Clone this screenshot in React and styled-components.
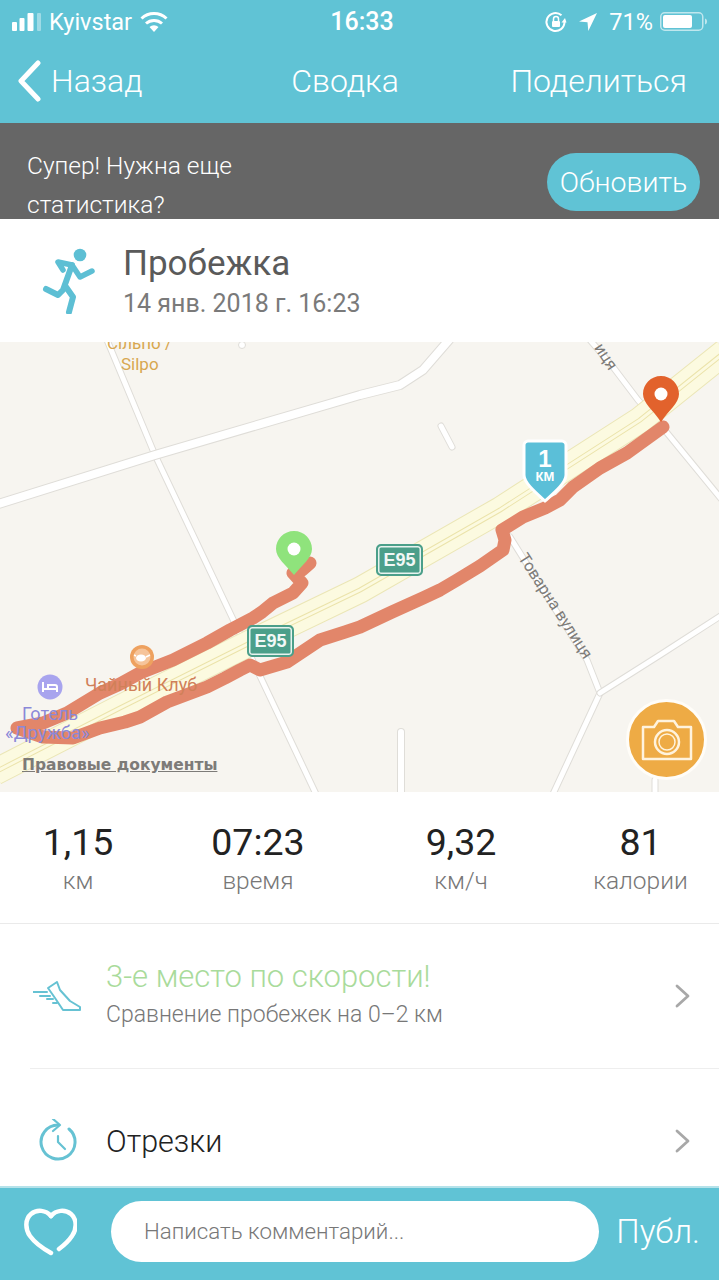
import React from 'react';
import styled, { createGlobalStyle } from 'styled-components';

const GlobalStyle = createGlobalStyle`
  html, body {
    margin: 0;
    padding: 0;
    background: #fff;
  }
`;

const teal = '#60c3d5';

const Page = styled.div`
  width: 719px;
  height: 1280px;
  overflow: hidden;
  display: flex;
  flex-direction: column;
  font-family: Roboto, "Liberation Sans", sans-serif;
  font-weight: 300;
  color: #fff;
`;
const TopBar = styled.div`
  height: 123px;
  flex: none;
  box-sizing: border-box;
  padding: 7px 12px 0 12px;
  background-color: ${teal};
  display: flex;
  flex-direction: column;
`;
const StatusRow = styled.div`
  display: grid;
  grid-template-columns: 1fr auto 1fr;
  align-items: center;
  height: 28px;
`;
const StatusSide = styled.div`
  display: flex;
  align-items: center;
  gap: ${(p) => p.$gap || 8}px;
  justify-content: ${(p) => (p.$end ? 'flex-end' : 'flex-start')};
  font-size: 23.5px;
  font-weight: 400;
`;
const Percent = styled.span`
  margin: 0 -3px 0 1px;
`;
const Clock = styled.div`
  font-size: 25px;
  font-weight: 500;
  margin-left: 5px;
`;
const NavRow = styled.div`
  margin-top: 18px;
  padding: 0 20px 0 5px;
  display: grid;
  grid-template-columns: 1fr auto 1fr;
  align-items: center;
  font-size: 32px;
  height: 56px;
`;
const BackLink = styled.div`
  display: flex;
  align-items: center;
  gap: 8px;
`;
const NavTitle = styled.div`
  margin-right: 14px;
`;
const ShareLink = styled.div`
  text-align: right;
`;
const Banner = styled.div`
  height: 96px;
  flex: none;
  box-sizing: border-box;
  padding: 0 19px 0 27px;
  background-color: #666;
  display: flex;
  justify-content: space-between;
  overflow: hidden;
`;
const BannerText = styled.div`
  font-size: 24.5px;
  line-height: 39px;
  padding-top: 23px;
`;
const UpdateButton = styled.div`
  align-self: flex-start;
  margin-top: 30px;
  width: 153px;
  height: 58px;
  border-radius: 29px;
  background-color: ${teal};
  font-size: 28.500px;
  display: flex;
  align-items: center;
  justify-content: center;
`;
const ActivityHead = styled.div`
  height: 123px;
  flex: none;
  box-sizing: border-box;
  padding: 0 0 0 40px;
  background: #fff;
  display: flex;
  align-items: center;
  gap: 27px;
`;
const RunnerWrap = styled.div`
  margin-top: 1px;
  display: flex;
`;
const ActivityTitle = styled.div`
  font-size: 35px;
  font-weight: 400;
  color: #5a5a5a;
  line-height: 40px;
`;
const ActivityDate = styled.div`
  font-size: 25px;
  font-weight: 400;
  color: #7a7a7a;
  margin-top: 5px;
`;
const MapArea = styled.div`
  position: relative;
  height: 450px;
  flex: none;
  overflow: hidden;
  background-color: #f7f5f0;
`;
const MapDrawing = styled.svg`
  position: absolute;
  inset: 0;
`;
const MapLabel = styled.span`
  position: absolute;
  left: ${(p) => p.$x}px;
  top: ${(p) => p.$y}px;
  font-size: ${(p) => p.$size || 17}px;
  line-height: 20px;
  font-weight: 400;
  color: ${(p) => p.$color};
  text-align: center;
  white-space: nowrap;
  transform: rotate(${(p) => p.$rotate || 0}deg);
  transform-origin: left center;
`;
const LegalLink = styled.span`
  position: absolute;
  left: 22px;
  top: 414px;
  font-family: "DejaVu Sans", sans-serif;
  font-size: 15.500px;
  font-weight: 700;
  color: #7d7b78;
  text-decoration: underline;
`;
const RoadShield = styled.div`
  position: absolute;
  left: ${(p) => p.$x}px;
  top: ${(p) => p.$y}px;
  width: 47px;
  height: 32px;
  box-sizing: border-box;
  border-radius: 5px;
  background: #4b9f8a;
  border: 2px solid #4b9f8a;
  box-shadow: inset 0 0 0 1.5px #e8f3ef;
  color: #f2f8f6;
  font-size: 18px;
  font-weight: 700;
  font-family: "Liberation Sans", sans-serif;
  display: flex;
  align-items: center;
  justify-content: center;
`;
const KmBadge = styled.div`
  position: absolute;
  left: 522px;
  top: 97px;
  width: 46px;
  height: 64px;
  color: #fff;
  font-family: "Liberation Sans", sans-serif;
  font-weight: 700;
  text-align: center;
`;
const KmShape = styled.svg`
  position: absolute;
  inset: 0;
`;
const KmValue = styled.div`
  position: relative;
  font-size: 24px;
  line-height: 22px;
  padding-top: 9px;
`;
const KmUnit = styled.div`
  position: relative;
  font-size: 13px;
  line-height: 14px;
`;
const CameraButton = styled.div`
  position: absolute;
  left: 626px;
  top: 357px;
  width: 81px;
  height: 81px;
  box-sizing: border-box;
  border-radius: 50%;
  background-color: #eeab45;
  border: 3px solid #fffdf8;
  display: flex;
  align-items: center;
  justify-content: center;
`;
const StatsRow = styled.div`
  height: 132px;
  flex: none;
  box-sizing: border-box;
  padding-top: 29px;
  border-bottom: 1px solid #eaeaea;
  background: #fff;
  display: grid;
  grid-template-columns: 156px 204px 202px 157px;
  text-align: center;
`;
const StatValue = styled.div`
  font-size: 37.500px;
  font-weight: 400;
  line-height: 43px;
  color: #222;
`;
const StatLabel = styled.div`
  font-size: 24.500px;
  color: #777;
  line-height: 30px;
  margin-top: 2px;
`;
const ListRow = styled.div`
  height: ${(p) => p.$height}px;
  flex: none;
  box-sizing: border-box;
  margin-left: 30px;
  padding: ${(p) => p.$top || 0}px 28px 0 0;
  background: #fff;
  border-bottom: ${(p) => (p.$divider ? '1px solid #eee' : 'none')};
  display: flex;
  align-items: center;
`;
const RowIcon = styled.div`
  width: 76px;
  flex: none;
  box-sizing: border-box;
  padding-left: ${(p) => p.$inset}px;
  display: flex;
`;
const RowBody = styled.div`
  flex: 1;
  margin-bottom: ${(p) => p.$lift || 0}px;
`;
const RowHighlight = styled.div`
  font-size: 31px;
  color: #a9db9b;
  line-height: 34px;
`;
const RowNote = styled.div`
  font-size: 23px;
  color: #777;
  margin-top: 7px;
`;
const RowTitle = styled.div`
  font-size: 30.500px;
  color: #222;
`;
const Footer = styled.div`
  flex: 1;
  background-color: ${teal};
  border-top: 2px solid #b5e2ea;
  box-sizing: border-box;
  padding: 13px 19px 0 24px;
  display: flex;
  align-items: flex-start;
  gap: 17px;
`;
const HeartWrap = styled.div`
  width: 53px;
  height: 48px;
  margin-top: 7px;
  margin-right: 17px;
  flex: none;
`;
const CommentBox = styled.div`
  flex: 1;
  height: 61px;
  border-radius: 31px;
  background: #fff;
  box-sizing: border-box;
  padding: 0 0 2px 33px;
  display: flex;
  align-items: center;
  color: #777;
  font-size: 22.300px;
`;
const PublishLink = styled.div`
  font-size: 33px;
  line-height: 61px;
`;

const Road = ({ points, width = 6 }) => (
  <>
    <polyline points={points} fill="none" stroke="#dfddd8" strokeWidth={width + 2} strokeLinecap="round" strokeLinejoin="round" />
    <polyline points={points} fill="none" stroke="#fff" strokeWidth={width} strokeLinecap="round" strokeLinejoin="round" />
  </>
);

// drawn in page coordinates, the view box starts at the top of the map
const routePoints = '310,563 302,570 293,573 302,583 293,593 273,603 262,612 253,618 230,630 207,643 173,660 140,673 120,684 100,693 67,713 43,723 17,728 43,737 73,738 100,728 125,722 140,717 167,702 207,687 225,678 240,670 250,665 260,670 287,662 305,650 320,640 345,632 360,627 392,612 423,598 440,590 457,580 480,566 503,550 505,540 502,530 523,517 545,508 560,500 573,487 600,468 627,453 645,440 663,427';
const highway = '-5,772 120,708 250,643 360,590 500,510 640,420 725,352';

const MapSketch = () => (
  <MapDrawing width="719" height="450" viewBox="0 342 719 450">
    <Road points="107,340 155,455 316,794" width={5} />
    <Road points="-5,505 155,455 360,395 400,385 423,370 449,340" width={8} />
    <Road points="590,340 613,367 638,400 663,428 722,500" width={5} />
    <Road points="510,537 587,660 600,693 553,794" width={5} />
    <Road points="600,693 660,655 722,615" width={5} />
    <Road points="441,426 452,447" width={5} />
    <Road points="401,732 401,796" width={6} />
    <Road points="655,780 655,796" width={5} />
    <circle cx="242" cy="345" r="3.5" fill="#fff" stroke="#dfddd8" strokeWidth="1" />
    <polyline points={highway} fill="none" stroke="#ebe6b6" strokeWidth="27" />
    <polyline points={highway} fill="none" stroke="#fcfae0" strokeWidth="25" />
    <polyline points={highway} fill="none" stroke="#ebe3aa" strokeWidth="5" />
    <polyline points={highway} fill="none" stroke="#fcfae0" strokeWidth="3" />
    <polyline points={routePoints} fill="none" stroke="#e2866a" strokeWidth="13" strokeLinecap="round" strokeLinejoin="round" />
    <circle cx="142" cy="657" r="12" fill="#eea15f" />
    <circle cx="142" cy="657" r="8.500" fill="#f6c49a" />
    <ellipse cx="141" cy="658" rx="5" ry="3.500" fill="#fff" />
    <path d="M146 657l4-2M136 656l-2-1" stroke="#fff" strokeWidth="1.500" />
    <circle cx="50" cy="687" r="12.500" fill="#a8a4ee" />
    <path d="M43 682v10M43 689h14M57 692v-5a2 2 0 0 0-2-2h-7v4" fill="none" stroke="#fff" strokeWidth="2" />
    <path d="M294 531c-10 0-18 8-18 18 0 9 10 16 18 26 8-10 18-17 18-26 0-10-8-18-18-18z" fill="#8fe37c" />
    <circle cx="294" cy="549" r="6.5" fill="#fff" />
    <path d="M661 376c-10 0-18 8-18 18 0 9 10 16 18 28 8-12 18-19 18-28 0-10-8-18-18-18z" fill="#e2622c" />
    <circle cx="661" cy="394" r="6.5" fill="#fff" />
  </MapDrawing>
);

const StatusIcons = {
  Signal: () => (
    <svg width="29" height="18" viewBox="0 0 29 18">
      <rect x="0" y="9" width="5" height="9" rx="1" fill="#fff" />
      <rect x="7.500" y="5" width="5" height="13" rx="1" fill="#fff" />
      <rect x="15.500" y="0" width="6" height="18" rx="1" fill="#fff" />
      <rect x="25" y="0" width="4" height="18" rx="1" fill="#fff" opacity="0.4" />
    </svg>
  ),
  Wifi: () => (
    <svg width="28" height="22" viewBox="0 0 28 22" fill="none" stroke="#fff" strokeWidth="3">
      <path d="M1.5 7.5a18 18 0 0 1 25 0" />
      <path d="M6 12.5a12 12 0 0 1 16 0" />
      <path d="M14 21l-4.500-5a6.500 6.500 0 0 1 9 0z" fill="#fff" stroke="none" />
    </svg>
  ),
  Lock: () => (
    <svg width="24" height="24" viewBox="0 0 24 24" fill="none" stroke="#fff" strokeWidth="2">
      <path d="M20.500 12a9 9 0 1 1-3-6.700" />
      <path d="M21 8l1.500 4.500h-5z" fill="#fff" stroke="none" />
      <rect x="8" y="11" width="8" height="6" rx="1" fill="#fff" stroke="none" />
      <path d="M9.500 11V9a2.500 2.500 0 0 1 5 0v2" strokeWidth="1.500" />
    </svg>
  ),
  Location: () => (
    <svg width="20" height="20" viewBox="0 0 20 20">
      <path d="M19 1L1 9.500l8.500.8.800 8.700z" fill="#fff" />
    </svg>
  ),
  Battery: () => (
    <svg width="47" height="19" viewBox="0 0 47 19">
      <rect x="0.750" y="0.750" width="42" height="17.500" rx="4" fill="none" stroke="#fff" strokeOpacity="0.6" strokeWidth="1.500" />
      <rect x="3" y="3" width="29" height="13" rx="2" fill="#fff" />
      <path d="M45 6.500c1.300.4 2 1.500 2 3s-.7 2.600-2 3z" fill="#fff" opacity="0.6" />
    </svg>
  ),
};

const BackChevron = () => (
  <svg width="26" height="42" viewBox="0 0 26 42" fill="none" stroke="#fff" strokeWidth="5" strokeLinecap="round" strokeLinejoin="round">
    <path d="M21 3L4 21l17 18" />
  </svg>
);

const Runner = () => (
  <svg width="56" height="66" viewBox="0 0 56 66" fill="none" stroke="#5dbfd4" strokeWidth="5.500" strokeLinecap="round" strokeLinejoin="round">
    <circle cx="40" cy="7" r="6.300" fill="#5dbfd4" stroke="none" />
    <path d="M23 22l-5-8 14 3 8 12 12-6" />
    <path d="M32 17l-9 25-5 5-12-6" strokeWidth="6" />
    <path d="M26 39l7 10-4 15" strokeWidth="6" />
  </svg>
);

const ShoeIcon = () => (
  <svg width="50" height="32" viewBox="0 0 50 32" fill="none" stroke="#66c2d3" strokeWidth="2" strokeLinecap="round" strokeLinejoin="round">
    <path d="M0 12h14M7 16h10M14 19h6M20 23h4" />
    <path d="M24 2L15 8l7 10 8 12h17v-3L37 21 27 10z" />
  </svg>
);

const LapIcon = () => (
  <svg width="38" height="44" viewBox="0 0 38 44" fill="none" stroke="#66c2d3" strokeWidth="3" strokeLinecap="round" strokeLinejoin="round">
    <path d="M30 10A17 17 0 1 1 19 6" />
    <path d="M14 0l7 6-7 6" strokeWidth="2.200" />
    <path d="M19 17v6l7 7" strokeWidth="2.200" />
  </svg>
);

const Chevron = () => (
  <svg width="16" height="24" viewBox="0 0 16 24" fill="none" stroke="#a8a8a8" strokeWidth="2.800" strokeLinecap="round" strokeLinejoin="round">
    <path d="M2 2l11 10L2 22" />
  </svg>
);

const CameraIcon = () => (
  <svg width="52" height="42" viewBox="0 0 52 42" fill="none" stroke="#fff3dd" strokeWidth="2.500" strokeLinejoin="round">
    <path d="M2 8h11l4-6h16l4 6h13v32H2z" />
    <circle cx="26" cy="23" r="12" />
    <circle cx="26" cy="23" r="8" strokeWidth="1.500" />
  </svg>
);

const HeartIcon = () => (
  <svg width="53" height="48" viewBox="0 0 53 48" fill="none" stroke="#fff" strokeWidth="4.500" strokeLinecap="round" strokeLinejoin="round">
    <path d="M27 8C22 2 13 1 7 6 1 11 1 21 6 28c5 7 12 12 21 17" />
    <path d="M27 8c5-6 14-7 20-2 6 5 6 15 1 22-2 3-5 7-13 13" />
  </svg>
);

const stats = [
  { value: '1,15', label: 'км' },
  { value: '07:23', label: 'время' },
  { value: '9,32', label: 'км/ч' },
  { value: '81', label: 'калории' },
];

function App() {
  return (
    <Page>
      <GlobalStyle />
      <TopBar>
        <StatusRow>
          <StatusSide>
            <StatusIcons.Signal />
            Kyivstar
            <StatusIcons.Wifi />
          </StatusSide>
          <Clock>16:33</Clock>
          <StatusSide $end $gap={10}>
            <StatusIcons.Lock />
            <StatusIcons.Location />
            <Percent>71%</Percent>
            <StatusIcons.Battery />
          </StatusSide>
        </StatusRow>
        <NavRow>
          <BackLink>
            <BackChevron />
            Назад
          </BackLink>
          <NavTitle>Сводка</NavTitle>
          <ShareLink>Поделиться</ShareLink>
        </NavRow>
      </TopBar>
      <Banner>
        <BannerText>
          Супер! Нужна еще
          <br />
          статистика?
        </BannerText>
        <UpdateButton>Обновить</UpdateButton>
      </Banner>
      <ActivityHead>
        <RunnerWrap>
          <Runner />
        </RunnerWrap>
        <div>
          <ActivityTitle>Пробежка</ActivityTitle>
          <ActivityDate>14 янв. 2018 г. 16:23</ActivityDate>
        </div>
      </ActivityHead>
      <MapArea>
        <MapSketch />
        <MapLabel $x={107} $y={-9} $color="#d8a74f">Сільпо /</MapLabel>
        <MapLabel $x={121} $y={12} $color="#d8a74f">Silpo</MapLabel>
        <MapLabel $x={85} $y={333} $size={18} $color="#d08058">Чайный Клуб</MapLabel>
        <MapLabel $x={22} $y={362} $size={18} $color="#8b88d8">Готель</MapLabel>
        <MapLabel $x={5} $y={381} $size={18.500} $color="#8b88d8">«Дружба»</MapLabel>
        <MapLabel $x={522} $y={203} $size={16.300} $rotate={57} $color="#7d7b78">Товарна вулиця</MapLabel>
        <MapLabel $x={598} $y={-7} $size={16.300} $rotate={57} $color="#7d7b78">иця</MapLabel>
        <LegalLink>Правовые документы</LegalLink>
        <RoadShield $x={376} $y={202}>E95</RoadShield>
        <RoadShield $x={247} $y={283}>E95</RoadShield>
        <KmBadge>
          <KmShape width="46" height="64" viewBox="0 0 46 64">
            <path d="M6 2h34c2 0 4 2 4 4v30c0 8-12 18-21 26C14 54 2 44 2 36V6c0-2 2-4 4-4z" fill="#5bbfd8" stroke="#fff" strokeWidth="3" />
          </KmShape>
          <KmValue>1</KmValue>
          <KmUnit>КМ</KmUnit>
        </KmBadge>
        <CameraButton>
          <CameraIcon />
        </CameraButton>
      </MapArea>
      <StatsRow>
        {stats.map((stat) => (
          <div key={stat.label}>
            <StatValue>{stat.value}</StatValue>
            <StatLabel>{stat.label}</StatLabel>
          </div>
        ))}
      </StatsRow>
      <ListRow $height={145} $divider>
        <RowIcon $inset={3}>
          <ShoeIcon />
        </RowIcon>
        <RowBody $lift={5}>
          <RowHighlight>3-е место по скорости!</RowHighlight>
          <RowNote>Сравнение пробежек на 0–2 км</RowNote>
        </RowBody>
        <Chevron />
      </ListRow>
      <ListRow $height={117} $top={27}>
        <RowIcon $inset={9}>
          <LapIcon />
        </RowIcon>
        <RowBody>
          <RowTitle>Отрезки</RowTitle>
        </RowBody>
        <Chevron />
      </ListRow>
      <Footer>
        <HeartWrap>
          <HeartIcon />
        </HeartWrap>
        <CommentBox>Написать комментарий...</CommentBox>
        <PublishLink>Публ.</PublishLink>
      </Footer>
    </Page>
  );
}

export default App;
